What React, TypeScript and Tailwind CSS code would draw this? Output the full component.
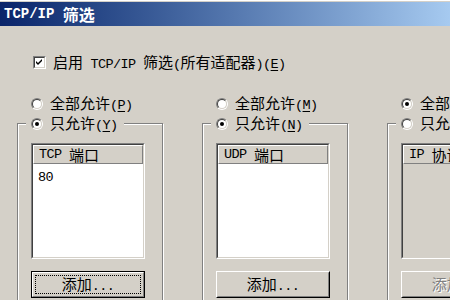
const L = ({ children }: { children: React.ReactNode }) => (
  <span className="font-['Liberation_Mono',monospace] text-[13.5px] tracking-[-0.6px] whitespace-pre">{children}</span>
);

const Radio = ({ checked }: { checked?: boolean }) => (
  <div className="w-[12px] h-[12px] shrink-0 rounded-full border border-t-[#808080] border-l-[#808080] border-r-white border-b-white">
    <div className="w-full h-full rounded-full border border-t-[#404040] border-l-[#404040] border-r-[#d4d0c8] border-b-[#d4d0c8] bg-white flex items-center justify-center">
      {checked && <div className="w-[4px] h-[4px] rounded-full bg-black" />}
    </div>
  </div>
);

const Label = ({ text, hot }: { text: string; hot: string }) => (
  <span className="whitespace-nowrap">
    {text}
    <L>
      (<span className="underline underline-offset-2">{hot}</span>)
    </L>
  </span>
);

type Col = {
  allKey: string;
  onlyKey: string;
  all?: boolean;
  proto: string;
  title: string;
  items: string[];
  disabled?: boolean;
  isDefault?: boolean;
};

const cols: Col[] = [
  { allKey: "P", onlyKey: "Y", proto: "TCP", title: "端口", items: ["80"], isDefault: true },
  { allKey: "M", onlyKey: "N", proto: "UDP", title: "端口", items: [] },
  { allKey: "A", onlyKey: "O", all: true, proto: "IP", title: "协议", items: [], disabled: true },
];

const AddButton = ({ isDefault, disabled }: { isDefault?: boolean; disabled?: boolean }) => {
  const label = (
    <span className={disabled ? "text-[#808080] [text-shadow:1px_1px_0_#ffffff]" : "text-black"}>
      添加<L>...</L>
    </span>
  );
  if (isDefault) {
    return (
      <div className="ml-[13px] mt-[12px] w-[114px] h-[27px] border border-black">
        <div className="w-full h-full border border-t-white border-l-white border-r-[#808080] border-b-[#808080] p-[2px]">
          <div className="w-full h-full border border-dotted border-black flex items-center justify-center">
            {label}
          </div>
        </div>
      </div>
    );
  }
  return (
    <div className="ml-[13px] mt-[12px] w-[114px] h-[27px] border border-t-white border-l-white border-r-black border-b-black">
      <div className="w-full h-full border border-t-[#d4d0c8] border-l-[#d4d0c8] border-r-[#808080] border-b-[#808080] flex items-center justify-center">
        {label}
      </div>
    </div>
  );
};

const Column = ({ col }: { col: Col }) => (
  <div className="w-[146px] shrink-0 flex flex-col">
    <div className="h-[12px] flex items-center pl-[14px] gap-[7px]">
      <Radio checked={col.all} />
      <Label text="全部允许" hot={col.allKey} />
    </div>
    <div className="mt-[13px] h-[200px] flex flex-col border border-[#808080] shadow-[inset_1px_1px_0_#ffffff,1px_1px_0_#ffffff]">
      <div className="-mt-[8px] ml-[8px] self-start h-[16px] flex items-center gap-[7px] pl-[5px] pr-[6px] bg-[#d4d0c8]">
        <Radio checked={!col.all} />
        <Label text="只允许" hot={col.onlyKey} />
      </div>
      <div className="ml-[13px] mt-[11px] w-[114px] h-[116px] border border-t-[#808080] border-l-[#808080] border-r-white border-b-white">
        <div
          className={`w-full h-full flex flex-col border border-t-[#404040] border-l-[#404040] border-r-[#d4d0c8] border-b-[#d4d0c8] ${
            col.disabled ? "bg-[#d4d0c8]" : "bg-white"
          }`}
        >
          <div className="h-[19px] shrink-0 flex items-center pl-[5px] bg-[#d4d0c8] border border-t-white border-l-white border-r-[#808080] border-b-[#808080] whitespace-nowrap">
            <L>{col.proto} </L>
            {col.title}
          </div>
          {col.items.map((it) => (
            <div key={it} className="pl-[5px] leading-[22px]">
              <L>{it}</L>
            </div>
          ))}
        </div>
      </div>
      <AddButton isDefault={col.isDefault} disabled={col.disabled} />
    </div>
  </div>
);

export default function App() {
  return (
    <div className="w-[450px] h-[300px] overflow-hidden bg-[#d4d0c8] text-black text-[15px] leading-none font-['Noto_Sans_CJK_SC',sans-serif]">
      <div className="h-[1px] bg-white" />
      <div className="mt-[1px] h-[24px] flex items-center pl-[4px] bg-gradient-to-r from-[#0a246a] to-[#a6caf0] text-white font-bold text-[16px] whitespace-nowrap">
        <span className="font-['Liberation_Mono',monospace] text-[14px] whitespace-pre">TCP/IP </span>筛选
      </div>
      <div className="mt-[30px] pl-[33px] h-[13px] flex items-center gap-[7px]">
        <div className="w-[13px] h-[13px] shrink-0 border border-t-[#808080] border-l-[#808080] border-r-white border-b-white">
          <div className="w-full h-full bg-white border border-t-[#404040] border-l-[#404040] border-r-[#d4d0c8] border-b-[#d4d0c8] flex items-center justify-center">
            <svg width="9" height="9" viewBox="0 0 9 9">
              <polygon points="1,3 3,5 7,1 7,3 3,7 1,5" fill="#000" />
            </svg>
          </div>
        </div>
        <span className="whitespace-nowrap">
          启用<L> TCP/IP </L>筛选<L>(</L>所有适配器<L>)(</L>
          <L>
            <span className="underline underline-offset-2">E</span>)
          </L>
        </span>
      </div>
      <div className="mt-[29px] pl-[17px] flex gap-[39px]">
        {cols.map((c) => (
          <Column key={c.proto} col={c} />
        ))}
      </div>
    </div>
  );
}
